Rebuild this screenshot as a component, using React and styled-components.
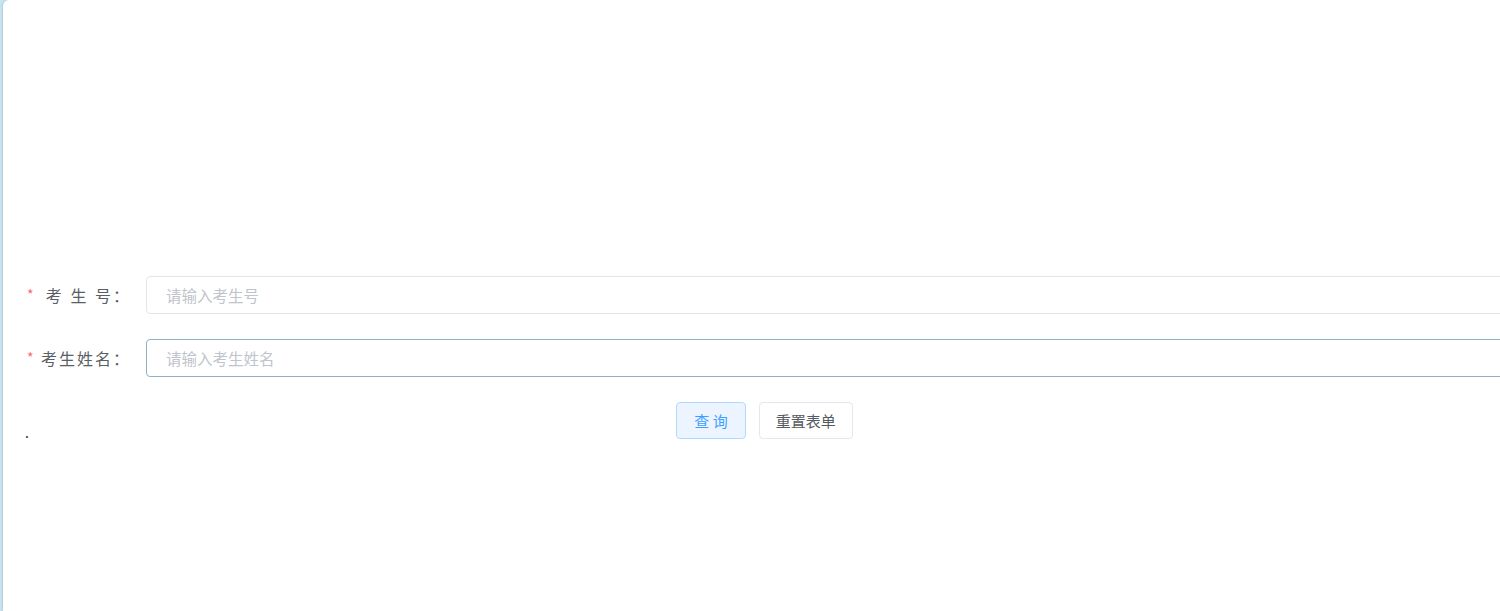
import React, { useEffect, useRef } from "react";
import styled, { createGlobalStyle } from "styled-components";

const GlobalStyle = createGlobalStyle`
  html, body {
    margin: 0;
    padding: 0;
    background: #c9e4ee;
    font-family: "Noto Sans CJK SC", "Noto Sans", sans-serif;
    overflow: clip;
  }
`;

const Card = styled.div`
  margin-left: 3px;
  height: 611px;
  background: #ffffff;
  border-top-left-radius: 6px;
  box-shadow: -1px 0 2px rgba(120, 170, 190, 0.35);
  overflow: clip;
`;

const Form = styled.form`
  width: max-content;
  padding: 276px 0 0 21px;
`;

const FormItem = styled.div`
  display: flex;
  align-items: center;
  margin-bottom: 25px;
`;

const Label = styled.label`
  width: 122px;
  flex-shrink: 0;
  box-sizing: border-box;
  padding-right: 15px;
  display: flex;
  align-items: center;
  justify-content: space-between;
  font-size: 16px;
  letter-spacing: 2px;
  word-spacing: 1px;
  color: #5a5e66;
  white-space: pre;
`;

const Star = styled.span`
  margin-left: 3px;
  margin-top: -2px;
  color: #f56c6c;
  font-size: 14px;
  letter-spacing: 0;
`;

const Input = styled.input`
  width: 1400px;
  flex-shrink: 0;
  height: 38px;
  box-sizing: border-box;
  padding: 0 19px;
  border: 1px solid ${(p) => (p.$active ? "#8fb1c4" : "#e2e5ea")};
  border-radius: 4px;
  font-family: "Noto Sans CJK SC", sans-serif;
  font-size: 15.5px;
  color: #606266;
  caret-color: #555;
  outline: none;

  &::placeholder {
    color: #c0c4cc;
  }
`;

const ButtonRow = styled.div`
  display: flex;
  align-items: flex-end;
`;

const Dot = styled.span`
  width: 122px;
  flex-shrink: 0;
  font-size: 14px;
  line-height: 14px;
  color: #333;
  padding-left: 1px;
  box-sizing: border-box;
`;

const ButtonArea = styled.div`
  width: 1237px;
  display: flex;
  justify-content: center;
  gap: 13px;
`;

const Button = styled.button`
  height: 37px;
  padding: 0 ${(p) => p.$pad}px;
  border-radius: 4px;
  border: 1px solid ${(p) => (p.$primary ? "#b3d8ff" : "#e4e7ed")};
  background: ${(p) => (p.$primary ? "#ecf5ff" : "#ffffff")};
  color: ${(p) => (p.$primary ? "#409eff" : "#555a61")};
  font-family: "Noto Sans CJK SC", sans-serif;
  font-size: 15px;
  white-space: pre;
  cursor: pointer;
`;

const App = () => {
  const nameRef = useRef(null);

  useEffect(() => {
    // 두 번째 입력칸에 커서를 두되 스크롤은 움직이지 않게
    nameRef.current?.focus({ preventScroll: true });
  }, []);

  return (
    <>
      <GlobalStyle />
      <Card>
        <Form onSubmit={(e) => e.preventDefault()}>
          <FormItem>
            <Label>
              <Star>*</Star>
              <span>考 生 号：</span>
            </Label>
            <Input placeholder="请输入考生号" />
          </FormItem>
          <FormItem>
            <Label>
              <Star>*</Star>
              <span>考生姓名：</span>
            </Label>
            <Input ref={nameRef} $active placeholder="请输入考生姓名" />
          </FormItem>
          <ButtonRow>
            <Dot>.</Dot>
            <ButtonArea>
              <Button type="submit" $primary $pad={17}>
                查 询
              </Button>
              <Button type="button" $pad={16}>
                重置表单
              </Button>
            </ButtonArea>
          </ButtonRow>
        </Form>
      </Card>
    </>
  );
};

export default App;
